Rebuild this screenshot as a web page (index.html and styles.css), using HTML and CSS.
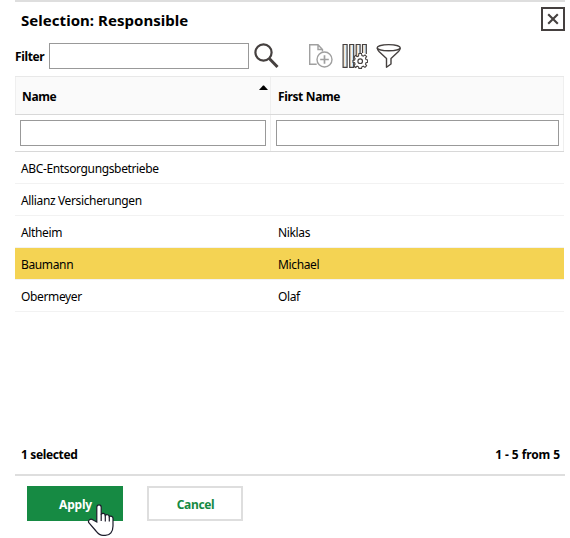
FILE: index.html
```html
<!DOCTYPE html>
<html lang="en">
<head>
<meta charset="utf-8">
<title>Selection: Responsible</title>
<link rel="stylesheet" href="styles.css">
</head>
<body>
<main class="dialog">
  <header class="titlebar">
    <h1>Selection: Responsible</h1>
    <button class="close" aria-label="Close"><svg width="12" height="12" viewBox="0 0 12 12"><path d="M1.2 1.2 10.8 10.8M10.8 1.2 1.2 10.8" stroke="#45403f" stroke-width="2.1"/></svg></button>
  </header>
  <div class="toolbar">
    <label for="filter">Filter</label>
    <input id="filter" class="filter">
    <svg class="search" width="26" height="26" viewBox="0 0 26 26" fill="none" stroke="#45403f"><circle cx="9.5" cy="9.5" r="8.1" stroke-width="2.2"/><path d="M15.5 15.7 23.5 24" stroke-width="3"/></svg>
    <svg class="add" width="26" height="26" viewBox="0 0 26 26" fill="none" stroke="#a0a0a0" stroke-width="1.4"><path d="M8.700 21.3H1.7V1.7H10L14.500 6.5V8.5M10 1.7V6.5H14.500"/><circle cx="16.500" cy="16.500" r="7.5"/><path d="M16.500 12.2V20.800M12.200 16.500H20.8" stroke-width="1.7"/></svg>
    <svg class="columns" width="26" height="26" viewBox="0 0 26 26" fill="none" stroke="#45403f" stroke-width="1.2"><path d="M2.2 2V24M8.900 2V24M15.400 2V24M22 2V10" stroke="#f8dcb8" stroke-width="1"/><path d="M4 2V24M10.700 2V24M17.200 2V11M23.200 2V10" stroke="#b5dcf7" stroke-width="1"/><path d="M1.100 1.500H5.100V24.300H1.100ZM7.700 1.500H11.700V24.300H7.700ZM18.100 10V1.500H14.200V24.300M24.300 11V1.500H20.500V10"/><path d="M16.900 10.5h2.6l.4 2 1.4.6 1.7-1.2 1.6 1.7-1.1 1.6.5 1.4 1.6.4v2.3l-1.6.4-.5 1.4 1.1 1.6-1.6 1.7-1.7-1.2-1.4.6-.4 1.6h-2.6l-.4-1.6-1.4-.6-1.7 1.2-1.4-1.7 1.1-1.6-.5-1.4-1.6-.4V17.500l1.6-.4.5-1.4-1.1-1.6 1.4-1.7 1.700 1.200 1.400-.600Z" fill="#fff" stroke-width="1.1"/><circle cx="18.2" cy="18.200" r="2.300"/></svg>
    <svg class="funnel" width="26" height="26" viewBox="0 0 26 26" fill="none" stroke="#45403f" stroke-width="1.4" stroke-linejoin="round"><ellipse cx="12.7" cy="4.700" rx="11.500" ry="3.100"/><path d="M1.200 5C1.500 7 2 7.600 3 8.600L10.500 15.500V24.300L15 21V15.500L22.500 8.600C23.500 7.600 24 7 24.200 5"/></svg>
  </div>
  <section class="grid">
    <div class="row head">
      <div class="cell"><span>Name</span><svg class="sort" width="10" height="5" viewBox="0 0 10 5"><path d="M0 5 4 .5h1L9 5Z"/></svg></div>
      <div class="cell"><span>First Name</span></div>
    </div>
    <div class="row filters">
      <div class="cell"><input aria-label="Name"></div>
      <div class="cell"><input aria-label="First Name"></div>
    </div>
    <div class="row item"><div>ABC-Entsorgungsbetriebe</div><div></div></div>
    <div class="row item"><div>Allianz Versicherungen</div><div></div></div>
    <div class="row item"><div>Altheim</div><div>Niklas</div></div>
    <div class="row item selected"><div>Baumann</div><div>Michael</div></div>
    <div class="row item"><div>Obermeyer</div><div>Olaf</div></div>
  </section>
  <div class="status"><span>1 selected</span><span class="range">1 - 5 from 5</span></div>
  <footer class="actions">
    <button class="apply">Apply</button>
    <button class="cancel">Cancel</button>
    <svg class="cursor" width="28" height="34" viewBox="0 0 28 34"><path d="M10.800 19V4.300C10.800 1 15.200 1 15.200 4.300V11.500C16 9.900 19 10 19.300 12.300C20.500 11.300 23 11.500 23.300 13.600C24.700 12.600 27 13.300 27 15.500V23C27 28.500 24 32.400 19.300 32.400H17C13.500 32.400 12 30.500 10 28L3 20C1.300 17.500 4.500 15.200 6.700 16.800Z" fill="#fff" stroke="#1c1c2b" stroke-width="1.200"/><path d="M15.200 11V18M19.300 12V18.500M23.300 13.500V18.500" fill="none" stroke="#1c1c2b" stroke-width="1.200"/></svg>
  </footer>
</main>
</body>
</html>
```
FILE: styles.css
```css
* { box-sizing: border-box; }
body {
  margin: 0;
  background: #fff;
  color: #000;
  font: 12px/16px "Noto Sans", "Open Sans", sans-serif;
  letter-spacing: -0.36px;
}
.dialog {
  width: 550px;
  height: 538px;
  margin-left: 15px;
  border-top: 2px solid #dedede;
  display: flex;
  flex-direction: column;
}
.titlebar {
  height: 41px;
  padding: 5px 0 0 6px;
  display: flex;
  justify-content: space-between;
  align-items: flex-start;
}
h1 {
  margin: 3px 0 0;
  font-size: 15px;
  line-height: 20px;
  font-weight: 700;
  letter-spacing: 0.04px;
}
button { font: inherit; letter-spacing: inherit; padding: 0; border-radius: 0; }
.close {
  width: 24px;
  height: 24px;
  border: 2px solid #45403f;
  background: #fff;
  display: flex;
  align-items: center;
  justify-content: center;
}
.toolbar {
  height: 33px;
  display: flex;
  align-items: flex-start;
}
.toolbar svg { flex: none; }
label {
  width: 34px;
  padding-top: 6px;
  font-weight: 700;
}
input {
  height: 26px;
  padding: 2px 4px;
  border: 1px solid #999;
  border-radius: 0;
  background: #fff;
  font: inherit;
}
.filter { width: 200px; }
.search { margin-left: 5px; }
.add { margin-left: 28px; }
.columns { margin-left: 8px; }
.funnel { margin-left: 8px; }
.grid {
  width: 550px;
  height: 368px;
}
.row {
  width: 549px;
  display: grid;
  grid-template-columns: 256px 293px;
}
.head {
  height: 39px;
  background: #fafafa;
  border-top: 1px solid #e8e8e8;
  border-bottom: 1px solid #d8d8d8;
  font-weight: 700;
}
.cell { border-right: 1px solid #efefef; }
.head .cell {
  padding: 12px 1px 0 7px;
  display: flex;
  justify-content: space-between;
}
.head .cell:first-child { border-left: 1px solid #efefef; padding-left: 6px; }
.sort { margin-top: -4px; }
.filters {
  height: 37px;
  border-bottom: 1px solid #d8d8d8;
}
.filters .cell { padding: 5px 4px 0 5px; display: flex; }
.filters input { width: 100%; }
.filters .cell:first-child input { width: 246px; flex: none; }
.item {
  height: 32px;
  border-bottom: 1px solid #f2f2f2;
}
.item > div { padding: 9px 0 0 6px; }
.item > div + div { padding-left: 7px; }
.selected { background: #f4d353; }
.status {
  height: 32px;
  padding: 3px 5px 0 6px;
  border-bottom: 2px solid #dedede;
  display: flex;
  justify-content: space-between;
  font-weight: 700;
}
.range { letter-spacing: -0.1px; }
.actions {
  position: relative;
  padding: 10px 12px 0;
  display: flex;
  gap: 24px;
  font-weight: 700;
}
.apply, .cancel { width: 96px; height: 35px; padding: 2px 0 0 1px; }
.apply { border: 0; background: #168a43; color: #fff; letter-spacing: -0.2px; }
.cancel { border: 2px solid #dedede; background: #fff; color: #168a43; }
.cursor {
  position: absolute;
  left: 71px;
  top: 27px;
}
```
